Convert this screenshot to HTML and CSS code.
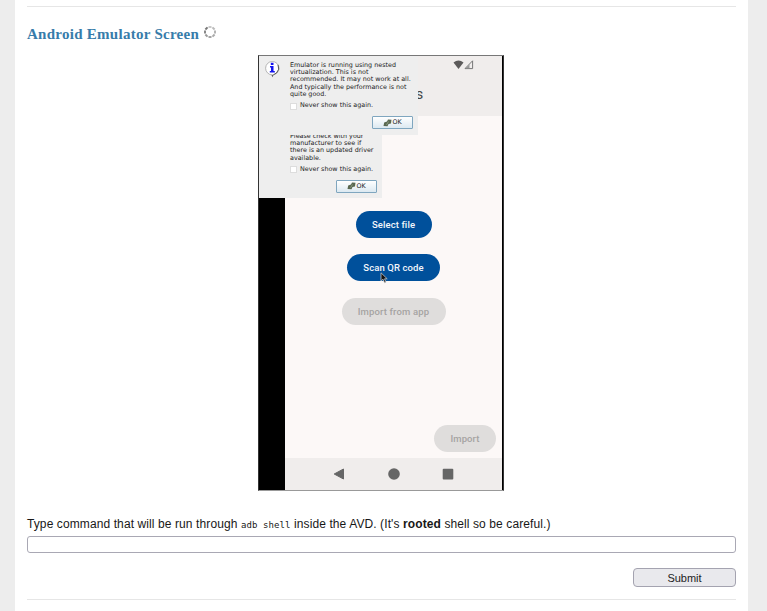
FILE: index.html
```html
<!DOCTYPE html>
<html lang="en">
<head>
<meta charset="utf-8">
<title>Android Emulator Screen</title>
<link rel="stylesheet" href="styles.css">
</head>
<body>
<main class="page">
  <hr class="rule">
  <h2 class="title">Android Emulator Screen
    <svg class="spinner" width="14" height="14" viewBox="-7 -7 14 14">
      <g fill="none" stroke-width="2">
        <path d="M-1.5-5H1.5" stroke="#c8c8c8"/>
        <path d="M-1.5-5H1.5" stroke="#bbb" transform="rotate(45)"/>
        <path d="M-1.5-5H1.5" stroke="#b4b4b4" transform="rotate(90)"/>
        <path d="M-1.5-5H1.5" stroke="#aaa" transform="rotate(135)"/>
        <path d="M-1.5-5H1.5" stroke="#a4a4a4" transform="rotate(180)"/>
        <path d="M-1.5-5H1.5" stroke="#999" transform="rotate(225)"/>
        <path d="M-1.5-5H1.5" stroke="#888" transform="rotate(270)"/>
        <path d="M-1.5-5H1.5" stroke="#777" transform="rotate(315)"/>
      </g>
    </svg>
  </h2>
  <section class="emulator">
    <div class="phone">
      <header class="appbar">
        <svg class="status" width="22" height="10" viewBox="0 0 22 10">
          <path d="M0.5 2.4Q5.5-1.2 10.5 2.4L5.5 9Z" fill="#5c5a5a"/>
          <path d="M12 8.6L19.6.8V8.6Z" fill="none" stroke="#777"/>
          <path d="M12.5 8.3L16.5 4.3V8.3Z" fill="#999"/>
        </svg>
        <span class="appname">s</span>
      </header>
      <div class="content">
        <button class="pill select">Select file</button>
        <button class="pill scan">Scan QR code
          <svg class="cursor" width="8" height="12" viewBox="0 0 8 12"><path d="M1 .8V9L3 7.2L4.6 10.8L6 10.1L4.5 6.8H7.2Z" fill="#111" stroke="#c8c8c8" stroke-width=".8"/></svg>
        </button>
        <button class="pill off fromapp">Import from app</button>
        <button class="pill off import">Import</button>
      </div>
      <nav class="navbar">
        <svg width="12" height="12" viewBox="0 0 12 12"><path d="M1.2 6L10.5 1V11Z" fill="#666" stroke="#666" stroke-linejoin="round"/></svg>
        <svg width="12" height="12" viewBox="0 0 12 12"><circle cx="6" cy="6" r="5.8" fill="#666"/></svg>
        <svg width="12" height="12" viewBox="0 0 12 12"><rect x=".7" y=".8" width="10.6" height="10.6" rx="1" fill="#666"/></svg>
      </nav>
    </div>
    <div class="dialog driver">
      <p class="message">Please check with your<br>manufacturer to see if<br>there is an updated driver<br>available.</p>
      <label class="again"><i class="box"></i>Never show this again.</label>
      <button class="ok"><svg width="9" height="8" viewBox="0 0 9 8"><path d="M.5 7L1.2 3.5L4 2.6L5 .5L8.5 .8L8 4.5L5.5 5L4.5 7.2Z" fill="#596850"/><path d="M3.5 5.8L5.5 2.5" stroke="#8a9a80" fill="none"/></svg>OK</button>
    </div>
    <div class="dialog nested">
      <svg class="info" width="17" height="17" viewBox="0 0 17 17">
        <path d="M10 12.5L8.6 16.2L7 13" fill="#444"/>
        <circle cx="8.3" cy="7.2" r="6.7" fill="#fff" stroke="#a4a4a4" stroke-width=".8"/>
        <path d="M14 3.8Q16.2 8.5 12.5 12L9.5 13.7" fill="none" stroke="#555"/>
        <path d="M6.8 1.8h2.7v2.3H6.8zM6 5.1H9.5V10.1H10.8V11.5H5.8V10.1H7V6.5H6Z" fill="#1414ee"/>
      </svg>
      <p class="message">Emulator is running using nested<br>virtualization. This is not<br>recommended. It may not work at all.<br>And typically the performance is not<br>quite good.</p>
      <label class="again"><i class="box"></i>Never show this again.</label>
      <button class="ok"><svg width="9" height="8" viewBox="0 0 9 8"><path d="M.5 7L1.2 3.5L4 2.6L5 .5L8.5 .8L8 4.5L5.5 5L4.5 7.2Z" fill="#596850"/><path d="M3.5 5.8L5.5 2.5" stroke="#8a9a80" fill="none"/></svg>OK</button>
    </div>
  </section>
  <form class="command">
    <label class="prompt" for="cmd">Type command that will be run through <code>adb shell</code> inside the AVD. (It's <b>rooted</b> shell so be careful.)</label>
    <input class="field" id="cmd" type="text">
    <button class="submit" type="button">Submit</button>
  </form>
  <hr class="rule">
</main>
</body>
</html>
```
FILE: styles.css
```css
* { box-sizing: border-box; }
body { margin: 0; background: #ededed; color: #181818; font-family: "Liberation Sans", Arial, sans-serif; }
button { font: inherit; margin: 0; padding: 0; }
.page { width: 733px; height: 611px; margin-left: 15px; padding: 6px 12px 0; background: #fff; overflow: hidden; }
.rule { height: 1px; margin: 0; border: 0; background: #e6e6e6; }
.title { display: flex; height: 48px; margin: 0; padding-top: 18px; color: #377caa; font: bold 15px/19px "Liberation Serif", serif; letter-spacing: .27px; }
.spinner { margin-left: 4px; }

.emulator { position: relative; width: 246px; height: 436px; margin-left: 231px; border: 1px solid #333; border-top-color: #777; border-bottom-color: #999; background: #000; overflow: hidden; }
.phone { display: flex; flex-direction: column; width: 217px; height: 434px; margin-left: 26px; background: #fcf8f7; font-family: Roboto, sans-serif; }
.appbar { height: 60px; background: #f0edec; display: flex; flex-direction: column; }
.status { margin: 4px 0 0 168px; }
.appname { margin: 14px 0 0 130.5px; font-size: 15px; line-height: 21px; color: #444; }
.content { flex: 1; display: flex; flex-direction: column; align-items: center; padding-top: 95px; }
.pill { position: relative; flex: none; height: 27px; margin-bottom: 16.4px; border: 0; border-radius: 14px; background: #00509b; color: #f2f6fb; font-weight: 500; font-size: 9.5px; letter-spacing: .1px; }
.select { width: 76px; }
.scan { width: 93px; }
.off { background: #dfdddc; color: #a5a3a2; }
.fromapp { width: 104px; letter-spacing: .15px; }
.import { width: 62px; align-self: flex-end; margin: 83.5px 6px 0 0; }
.cursor { position: absolute; left: 33px; top: 18px; }
.navbar { height: 32px; background: #f0edec; display: flex; justify-content: center; align-items: center; gap: 42.5px; }

.dialog { position: absolute; left: 0; background: #eee; color: #222; font: 6.4px/7.2px "DejaVu Sans", sans-serif; }
.nested { top: 0; width: 159px; height: 79px; padding: 6px 5px 0 31px; }
.driver { top: 70px; width: 123px; height: 72px; padding: 7px 5px 0 31px; }
.message { margin: 0; white-space: nowrap; }
.again { display: flex; align-items: center; height: 8px; margin-top: 4px; gap: 3px; white-space: nowrap; }
.box { width: 7px; height: 7px; background: #fff; border: 1px solid #ddd; }
.ok { display: flex; align-items: center; justify-content: center; gap: 0; width: 41px; height: 13px; margin: 6px 0 0 auto; border: 1px solid #7fa6bf; border-radius: 1px; background: linear-gradient(#fff, #dce9f1); color: #222; }
.info { position: absolute; left: 5px; top: 5px; }

.command { display: flex; flex-direction: column; height: 108px; padding-top: 24px; }
.prompt { height: 21px; font-size: 12px; line-height: 18px; letter-spacing: .1px; white-space: nowrap; }
.prompt code { font: 9px "DejaVu Sans Mono", monospace; }
.field { width: 709px; height: 17px; margin: 0; border: 1px solid #a9a8b4; border-radius: 3px; background: #fff; }
.submit { width: 103px; height: 19px; margin: 15px 0 0 auto; border: 1px solid #a4a3b0; border-radius: 4px; background: #e9e9ed; color: #222; font-size: 11px; }
```
